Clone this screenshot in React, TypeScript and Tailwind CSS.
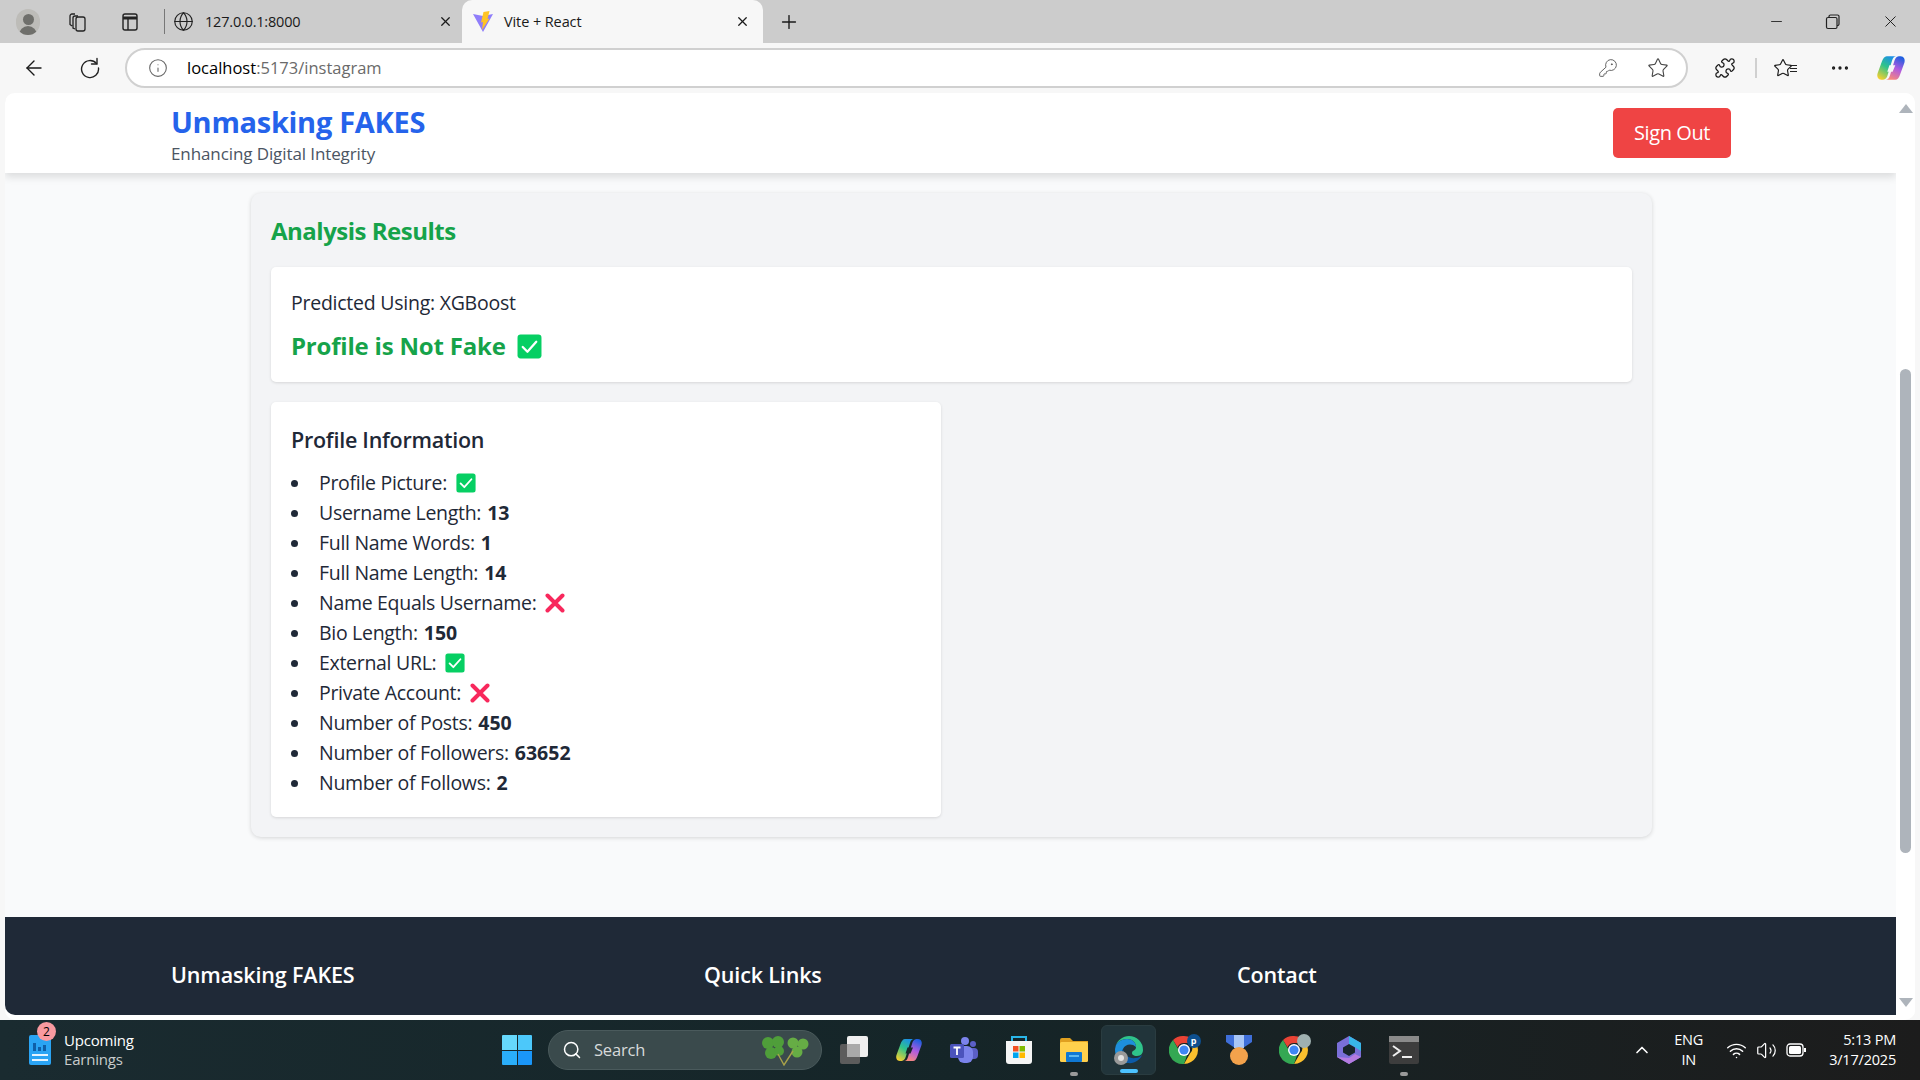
import { ReactNode } from 'react'
import { ArrowLeft, Info, KeyRound, Star, Puzzle, MoreHorizontal, Globe, X, Plus, Minus, ChevronUp, Search, Wifi, Volume2 } from 'lucide-react'

function CheckBox({ size }: { size: number }) {
  return (
    <svg width={size} height={size} viewBox="0 0 24 24" className="inline-block shrink-0">
      <rect x="0.5" y="0.5" width="23" height="23" rx="3" fill="#06cf63" />
      <path d="M5.5 12.5l4.5 4.5 8.5-9.5" fill="none" stroke="#fff" strokeWidth="2.2" strokeLinecap="round" strokeLinejoin="round" />
    </svg>
  )
}

function Cross() {
  return (
    <svg width="20" height="20" viewBox="0 0 20 20" className="inline-block shrink-0">
      <path d="M2.5 2.5l15 15M17.5 2.5l-15 15" fill="none" stroke="#f8285c" strokeWidth="4" strokeLinecap="round" />
    </svg>
  )
}

function Copilot({ size, hole }: { size: number; hole: string }) {
  return (
    <svg width={size} height={size} viewBox="0 0 28 28">
      <defs>
        <linearGradient id={`cpA${size}`} x1="0.7" y1="0" x2="0.2" y2="1">
          <stop offset="0" stopColor="#1b8fe8" />
          <stop offset="0.45" stopColor="#2fc38b" />
          <stop offset="1" stopColor="#f7d02e" />
        </linearGradient>
        <linearGradient id={`cpB${size}`} x1="0.7" y1="0" x2="0.3" y2="1">
          <stop offset="0" stopColor="#1d5fe0" />
          <stop offset="0.5" stopColor="#b05be0" />
          <stop offset="1" stopColor="#f98a7a" />
        </linearGradient>
      </defs>
      <path d="M10 3h9c-2 0-3 1-4 4l-4 13c-1 4-3 5-5 5H5C2 25 .500 22 1.500 19l4-11C6.500 5 8 3 10 3z" fill={`url(#cpA${size})`} />
      <path d="M18 25H9c2 0 3-1 4-4l4-13c1-4 3-5 5-5h1c3 0 4.500 3 3.500 6l-4 11c-1 3-2.500 5-4.500 5z" fill={`url(#cpB${size})`} />
      <path d="M12.500 11.500h5.500l-2.500 6h-5z" fill={hole} />
    </svg>
  )
}

function ChromeLogo({ badge }: { badge: ReactNode }) {
  return (
    <span className="relative block h-[30px] w-[30px]">
      <svg width="30" height="30" viewBox="0 0 30 30">
        <path d="M15 1a14 14 0 0 1 12.1 7H15a7 7 0 0 0-6.5 4.3L4 5a14 14 0 0 1 11-4z" fill="#e94335" />
        <path d="M27.1 8A14 14 0 0 1 15 29l6-10.4A7 7 0 0 0 21 8z" fill="#fbc02d" />
        <path d="M15 29A14 14 0 0 1 4 5l6 10.5a7 7 0 0 0 8.5 3.5L15 29z" fill="#34a853" />
        <circle cx="15" cy="15" r="6" fill="#fff" />
        <circle cx="15" cy="15" r="4.6" fill="#3f86f4" />
      </svg>
      {badge}
    </span>
  )
}

const taskbarIcons: ReactNode[] = [
  <svg key="taskview" width="30" height="30" viewBox="0 0 30 30">
    <rect x="1" y="9" width="20" height="20" rx="2" fill="#5c5c5c" />
    <rect x="8" y="1" width="21" height="21" rx="2" fill="#efefef" />
    <rect x="8" y="9" width="13" height="13" fill="#a9a9a9" />
  </svg>,
  <Copilot key="copilot" size={28} hole="#18282b" />,
  <svg key="teams" width="30" height="30" viewBox="0 0 30 30">
    <circle cx="24" cy="9" r="3" fill="#5b5fc7" />
    <circle cx="16" cy="6" r="4" fill="#7b83eb" />
    <rect x="19" y="13" width="10" height="11" rx="4" fill="#5b5fc7" />
    <rect x="9" y="11" width="15" height="17" rx="6" fill="#7b83eb" />
    <rect x="1" y="9" width="14" height="14" rx="1.5" fill="#4b53bc" />
    <path d="M4.5 12.5h7M8 12.5v7.5" stroke="#fff" strokeWidth="1.8" />
  </svg>,
  <svg key="store" width="30" height="32" viewBox="0 0 30 32">
    <path d="M8 8V3h14v5" fill="none" stroke="#29b6e8" strokeWidth="2" />
    <path d="M2 7h26v20a3 3 0 0 1-3 3H5a3 3 0 0 1-3-3z" fill="#f5f5f5" />
    <rect x="9" y="12" width="5.5" height="5.5" fill="#f25022" />
    <rect x="15.5" y="12" width="5.5" height="5.5" fill="#7fba00" />
    <rect x="9" y="18.5" width="5.5" height="5.5" fill="#00a4ef" />
    <rect x="15.5" y="18.5" width="5.5" height="5.5" fill="#ffb900" />
  </svg>,
  <svg key="files" width="30" height="30" viewBox="0 0 30 30">
    <path d="M1 5a2 2 0 0 1 2-2h8l3 3h15v4H1z" fill="#e0a020" />
    <rect x="1" y="7" width="28" height="20" rx="1.5" fill="#ffd04c" />
    <rect x="7" y="17" width="16" height="10" rx="1" fill="#0f78d4" />
    <rect x="10" y="20" width="10" height="2" fill="#5cb8f0" />
  </svg>,
  <span key="edge" className="relative block h-[30px] w-[30px]">
    <svg width="30" height="30" viewBox="0 0 30 30">
      <path d="M15 1a14 14 0 0 1 14 14c0 3-2 6-6 6-4 0-5-2-5-3 0-3 4-2 4-6C22 7 18 4 13 4 7 4 2 8 1.500 12 3 5 9 1 15 1z" fill="#2fc38b" />
      <path d="M1.500 12C2 8 7 4 13 4c5 0 9 3 9 8-4-4-11-3-13 2-2 4 0 10 5 14C6 28 1 22 1 15c0-1 .2-2 .5-3z" fill="#1d8fdc" />
      <path d="M14 28c-5-4-7-10-5-14 1 6 6 10 13 9 2 0 4-1 6-3-2 5-8 9-14 8z" fill="#0c5aa8" />
    </svg>
    <span className="absolute bottom-0 left-0 flex h-[14px] w-[14px] items-center justify-center rounded-full bg-[#9a9a9a]">
      <span className="h-[6px] w-[6px] rounded-full bg-[#e3e3e3]" />
    </span>
  </span>,
  <ChromeLogo key="chrome1" badge={<span className="absolute right-[-2px] top-[-1px] flex h-[14px] w-[14px] items-center justify-center rounded-full bg-[#0d4f8f] font-['Open_Sans',sans-serif] text-[9px] font-bold text-white">p</span>} />,
  <svg key="medal" width="28" height="32" viewBox="0 0 28 32">
    <path d="M1 1h26v7l-9 6h-8L1 8z" fill="#3f6fd9" />
    <path d="M9 1h10v13h-10z" fill="#a9c6f5" />
    <circle cx="14" cy="22" r="9" fill="#f3a24c" />
  </svg>,
  <ChromeLogo key="chrome2" badge={<span className="absolute right-[-2px] top-[-1px] h-[14px] w-[14px] rounded-full bg-[#9fb0b0]" />} />,
  <svg key="m365" width="28" height="30" viewBox="0 0 28 30">
    <path d="M14 1l12 7v14l-12 7L2 22V8z" fill="#7a6fd8" />
    <path d="M14 1l12 7v8l-8-5-4-2z" fill="#38b6e8" />
    <path d="M2 22l12 7 12-7-6-3-6 4z" fill="#b57be0" />
    <path d="M14 9l6 3.500v5L14 21l-6-3.500v-5z" fill="#18252a" />
  </svg>,
  <svg key="terminal" width="32" height="30" viewBox="0 0 32 30">
    <rect x="1" y="1" width="30" height="28" rx="2" fill="#3d3d3d" />
    <rect x="1" y="1" width="30" height="6" fill="#8a8a8a" />
    <path d="M5 11l7 5-7 5" fill="none" stroke="#eee" strokeWidth="2" />
    <path d="M14 22h10" stroke="#eee" strokeWidth="2" />
  </svg>,
]

const profileRows: { label: string; value?: string; icon?: 'check' | 'cross' }[] = [
  { label: 'Profile Picture:', icon: 'check' },
  { label: 'Username Length:', value: '13' },
  { label: 'Full Name Words:', value: '1' },
  { label: 'Full Name Length:', value: '14' },
  { label: 'Name Equals Username:', icon: 'cross' },
  { label: 'Bio Length:', value: '150' },
  { label: 'External URL:', icon: 'check' },
  { label: 'Private Account:', icon: 'cross' },
  { label: 'Number of Posts:', value: '450' },
  { label: 'Number of Followers:', value: '63652' },
  { label: 'Number of Follows:', value: '2' },
]

function BrowserChrome() {
  return (
    <>
      <div className="flex h-[43px] items-center bg-[#cccccc] text-[#1a1a1a]">
        <span className="ml-[16px] flex h-[26px] w-[24px] flex-col items-center justify-end overflow-hidden rounded-full bg-[#bdbcb8]">
          <span className="h-[11px] w-[11px] rounded-full bg-[#6f6f6b]" />
          <span className="mt-[1px] h-[9px] w-[18px] rounded-t-full bg-[#6f6f6b]" />
        </span>
        <svg width="20" height="20" viewBox="0 0 20 20" className="ml-[27px]" fill="none" stroke="#222" strokeWidth="1.3">
          <rect x="9" y="5" width="9" height="14" rx="2" />
          <path d="M8 17l-2-1V6a2 2 0 0 1 2-2h3M5 14l-2-1.500V4a2 2 0 0 1 2-2h3" />
        </svg>
        <svg width="20" height="20" viewBox="0 0 20 20" className="ml-[33px]" fill="none" stroke="#222" strokeWidth="1.4">
          <rect x="3" y="2" width="14" height="16" rx="2" />
          <path d="M3 6h14" strokeWidth="3" />
          <path d="M8 6v12" />
        </svg>
        <span className="ml-[24px] h-[25px] w-px bg-[#777]" />
        <div className="ml-[8px] flex w-[280px] items-center">
          <Globe size={21} strokeWidth={1.3} color="#222" />
          <span className="ml-[11px] font-['Open_Sans',sans-serif] text-[14.5px] tracking-[-0.2px]">127.0.0.1:8000</span>
          <X size={15} strokeWidth={2} className="ml-auto" />
        </div>
        <div className="ml-[9px] flex h-[43px] w-[301px] items-center rounded-t-[10px] bg-[#f7f7f7] pl-[10px] pr-[13px]">
          <svg width="22" height="22" viewBox="0 0 22 22">
            <path d="M1 3l10 18L21 3l-10 2z" fill="#8f7dfa" />
            <path d="M11.500 1l6-1-2 8 2-.5L10 19l1-8-2 .5z" fill="#ffc425" />
          </svg>
          <span className="ml-[10px] font-['Open_Sans',sans-serif] text-[14.5px] tracking-[-0.1px]">Vite + React</span>
          <X size={15} strokeWidth={2} className="ml-auto" />
        </div>
        <Plus size={22} strokeWidth={1.5} className="ml-[15px]" />
        <Minus size={17} strokeWidth={1.2} className="ml-auto" />
        <svg width="16" height="16" viewBox="0 0 16 16" className="ml-[40px]" fill="none" stroke="#222" strokeWidth="1.2">
          <rect x="1.500" y="3.500" width="10.500" height="11" rx="1.500" />
          <path d="M4 3V2.500a1.500 1.500 0 0 1 1.500-1.500h7A1.500 1.500 0 0 1 14 2.500V10a1.500 1.500 0 0 1-1.500 1.500H12" />
        </svg>
        <X size={19} strokeWidth={1.2} className="ml-[40px] mr-[20px]" />
      </div>
      <div className="flex h-[50px] items-center bg-[#f7f7f7] text-[#1a1a1a]">
        <ArrowLeft size={24} strokeWidth={1.4} className="ml-[22px]" />
        <svg width="22" height="22" viewBox="0 0 22 22" className="ml-[33px]" fill="none" stroke="#222" strokeWidth="1.4" strokeLinecap="round">
          <path d="M17.500 6.500A8.500 8.500 0 1 0 19.500 11" />
          <path d="M18 1.500v5.500h-5.500" />
        </svg>
        <div className="ml-[24px] flex h-[40px] w-[1563px] items-center rounded-full border-2 border-[#d0d0d0] bg-white">
          <Info size={20} strokeWidth={1.3} color="#666" className="ml-[21px]" />
          <span className="ml-[19px] font-['Open_Sans',sans-serif] text-[16.5px] text-black">
            localhost<span className="text-[#6a6a6a]">:5173/instagram</span>
          </span>
          <KeyRound size={20} strokeWidth={1.1} color="#555" className="ml-auto" />
          <Star size={22} strokeWidth={1.2} color="#444" className="ml-[29px] mr-[17px]" />
        </div>
        <Puzzle size={22} strokeWidth={1.4} className="ml-[26px]" />
        <span className="ml-[19px] h-[20px] w-[2px] bg-[#d0d0d0]" />
        <span className="ml-[16px] flex items-center">
          <Star size={20} strokeWidth={1.4} />
          <span className="ml-[-3px] flex flex-col gap-[2px]">
            <span className="h-px w-[7px] bg-[#222]" />
            <span className="h-px w-[7px] bg-[#222]" />
            <span className="h-px w-[7px] bg-[#222]" />
          </span>
        </span>
        <MoreHorizontal size={22} strokeWidth={1.6} className="ml-[32px]" />
        <span className="ml-[25px]"><Copilot size={30} hole="#f7f7f7" /></span>
      </div>
    </>
  )
}

function PageContent() {
  return (
    <div className="min-w-0 flex-1 overflow-hidden font-['Open_Sans',sans-serif] text-[#1f2937]">
      <header className="relative z-10 flex h-[80px] items-center justify-between bg-white pl-[166px] pr-[165px] shadow-[0_4px_8px_rgba(0,0,0,0.12)]">
        <div className="pt-[4px]">
          <h1 className="text-[29px] font-bold leading-[34px] tracking-[-0.3px] text-[#2563eb]">Unmasking FAKES</h1>
          <p className="mt-[4px] text-[17px] leading-[22px] tracking-[-0.1px] text-[#4b5563]">Enhancing Digital Integrity</p>
        </div>
        <button className="h-[50px] w-[118px] rounded-[5px] bg-[#ef4444] text-[20px] tracking-[-0.4px] text-white">Sign Out</button>
      </header>
      <main className="h-[744px] bg-[#f9fafb] pt-[20px]">
        <section className="ml-[246px] w-[1401px] rounded-[10px] bg-[#f3f4f6] p-[20px] shadow-[0_1px_4px_rgba(0,0,0,0.15)]">
          <h2 className="mb-[18px] text-[24px] font-bold leading-[36px] tracking-[-0.5px] text-[#16a34a]">Analysis Results</h2>
          <div className="mb-[20px] h-[115px] rounded-[5px] bg-white px-[20px] pt-[21px] shadow-[0_1px_3px_rgba(0,0,0,0.12)]">
            <p className="text-[19.5px] leading-[30px] tracking-[-0.25px]">Predicted Using: XGBoost</p>
            <p className="mt-[11px] flex items-center text-[24px] font-bold leading-[34px] tracking-[-0.2px] text-[#16a34a]">
              Profile is Not Fake
              <span className="ml-[11px] flex"><CheckBox size={25} /></span>
            </p>
          </div>
          <div className="h-[415px] w-[670px] rounded-[5px] bg-white px-[20px] pt-[22px] shadow-[0_1px_3px_rgba(0,0,0,0.12)]">
            <h3 className="mb-[12px] text-[21.5px] font-semibold leading-[32px] tracking-[-0.25px]">Profile Information</h3>
            <ul>
              {profileRows.map((row) => (
                <li key={row.label} className="flex h-[30px] items-center text-[19.5px] tracking-[-0.3px]">
                  <span className="mr-[21px] h-[7px] w-[7px] shrink-0 rounded-full bg-[#1f2937]" />
                  {row.label}
                  {row.value && <b className="ml-[6px] font-bold tracking-normal">{row.value}</b>}
                  {row.icon === 'check' && <span className="ml-[9px] flex"><CheckBox size={20} /></span>}
                  {row.icon === 'cross' && <span className="ml-[9px] flex"><Cross /></span>}
                </li>
              ))}
            </ul>
          </div>
        </section>
      </main>
      <footer className="h-[98px] rounded-bl-[10px] bg-[#1f2937] pl-[166px] pt-[40px] text-white">
        <div className="grid w-[1599px] grid-cols-3">
          {['Unmasking FAKES', 'Quick Links', 'Contact'].map((title) => (
            <h4 key={title} className="text-[21.5px] font-semibold leading-[36px] tracking-[-0.15px]">{title}</h4>
          ))}
        </div>
      </footer>
    </div>
  )
}

function Scrollbar() {
  return (
    <div className="flex w-[19px] shrink-0 flex-col items-center bg-white pt-[11px]">
      <span className="h-0 w-0 border-x-[7px] border-b-[9px] border-x-transparent border-b-[#aeb4bb]" />
      <span className="mt-[256px] h-[484px] w-[11px] rounded-full bg-[#aeb4bb]" />
      <span className="mt-auto mb-[9px] h-0 w-0 border-x-[7px] border-t-[9px] border-x-transparent border-t-[#aeb4bb]" />
    </div>
  )
}

function Taskbar() {
  return (
    <div className="relative flex h-[60px] items-center bg-gradient-to-r from-[#1a2b30] via-[#152528] to-[#1c1c1c] font-['Open_Sans',sans-serif] text-white">
      <div className="relative ml-[28px] flex items-center">
        <svg width="24" height="32" viewBox="0 0 24 32">
          <rect x="1" y="1" width="22" height="30" rx="2" fill="#2aa4f4" />
          <rect x="5" y="9" width="3" height="8" fill="#0f5fa8" />
          <rect x="10" y="13" width="3" height="4" fill="#0f5fa8" />
          <rect x="15" y="11" width="3" height="6" fill="#0f5fa8" />
          <path d="M4 21h16M4 26h16" stroke="#e5f4ff" strokeWidth="2" />
        </svg>
        <span className="absolute left-[9px] top-[-9px] flex h-[19px] w-[19px] items-center justify-center rounded-full bg-[#f99aa0] text-[12px] text-black">2</span>
        <div className="ml-[12px] text-[15px] leading-[19px] tracking-[-0.2px]">
          <div>Upcoming</div>
          <div className="text-[#c8cccc]">Earnings</div>
        </div>
      </div>
      <div className="absolute left-[502px] top-[5px] flex items-center">
        <span className="grid h-[30px] w-[30px] grid-cols-2 gap-[1px]">
          <span className="rounded-tl-[1px] bg-[#66d8fb]" />
          <span className="rounded-tr-[1px] bg-[#4cc8fa]" />
          <span className="rounded-bl-[1px] bg-[#2aaefa]" />
          <span className="rounded-br-[1px] bg-[#1a96f8]" />
        </span>
        <div className="ml-[16px] flex h-[40px] w-[274px] items-center rounded-full border border-[#4a5a5c] bg-[#3a4a4c] pl-[13px] pr-[12px]">
          <Search size={20} strokeWidth={1.8} />
          <span className="ml-[12px] text-[16.5px] tracking-[-0.2px] text-[#d7dada]">Search</span>
          <svg width="49" height="32" viewBox="0 0 49 32" className="ml-auto">
            <g fill="#4f9e3a">
              <circle cx="8" cy="9" r="6" /><circle cx="18" cy="8" r="6" /><circle cx="11" cy="19" r="6" /><circle cx="19" cy="17" r="5" />
            </g>
            <g fill="#66ad45">
              <circle cx="33" cy="9" r="5.500" /><circle cx="43" cy="10" r="5.500" /><circle cx="37" cy="18" r="5.500" />
            </g>
            <path d="M18 20l6 11 9-14" fill="none" stroke="#a9a24a" strokeWidth="1.4" />
          </svg>
        </div>
        <div className="ml-[4px] flex items-center">
          {taskbarIcons.map((icon, i) => (
            <div key={i} className={`relative flex h-[50px] w-[55px] items-center justify-center ${i === 5 ? 'rounded-[6px] border border-[#2a3c40] bg-[#21343a]' : ''}`}>
              {icon}
              {(i === 4 || i === 10) && <span className="absolute bottom-[-1px] h-[4px] w-[8px] rounded-full bg-[#9a9a9a]" />}
              {i === 5 && <span className="absolute bottom-[1px] h-[4px] w-[18px] rounded-full bg-[#4cc2ff]" />}
            </div>
          ))}
        </div>
      </div>
      <div className="ml-auto flex items-center pr-[24px] text-[14.5px] leading-[20px]">
        <ChevronUp size={20} strokeWidth={2} className="mr-[1px]" />
        <div className="ml-[21px] text-center tracking-[-0.2px]">
          <div>ENG</div>
          <div>IN</div>
        </div>
        <Wifi size={21} strokeWidth={1.7} className="ml-[23px]" />
        <Volume2 size={21} strokeWidth={1.4} className="ml-[9px]" />
        <svg width="20" height="14" viewBox="0 0 20 14" className="ml-[9px]" fill="none">
          <rect x="1" y="1" width="16" height="12" rx="3" stroke="#fff" strokeWidth="1.3" />
          <rect x="3" y="3" width="12" height="8" rx="1.500" fill="#fff" />
          <rect x="18" y="5" width="2" height="4" fill="#fff" />
        </svg>
        <div className="ml-[23px] text-right tracking-[-0.2px]">
          <div>5:13 PM</div>
          <div>3/17/2025</div>
        </div>
      </div>
    </div>
  )
}

export default function App() {
  return (
    <div className="flex h-[1080px] w-[1920px] flex-col overflow-hidden bg-[#f7f7f7]">
      <BrowserChrome />
      <div className="flex h-[927px] pl-[5px] pr-[5px]">
        <div className="flex min-w-0 flex-1 overflow-hidden rounded-[10px] bg-white pb-[4px]">
          <PageContent />
          <Scrollbar />
        </div>
      </div>
      <Taskbar />
    </div>
  )
}
